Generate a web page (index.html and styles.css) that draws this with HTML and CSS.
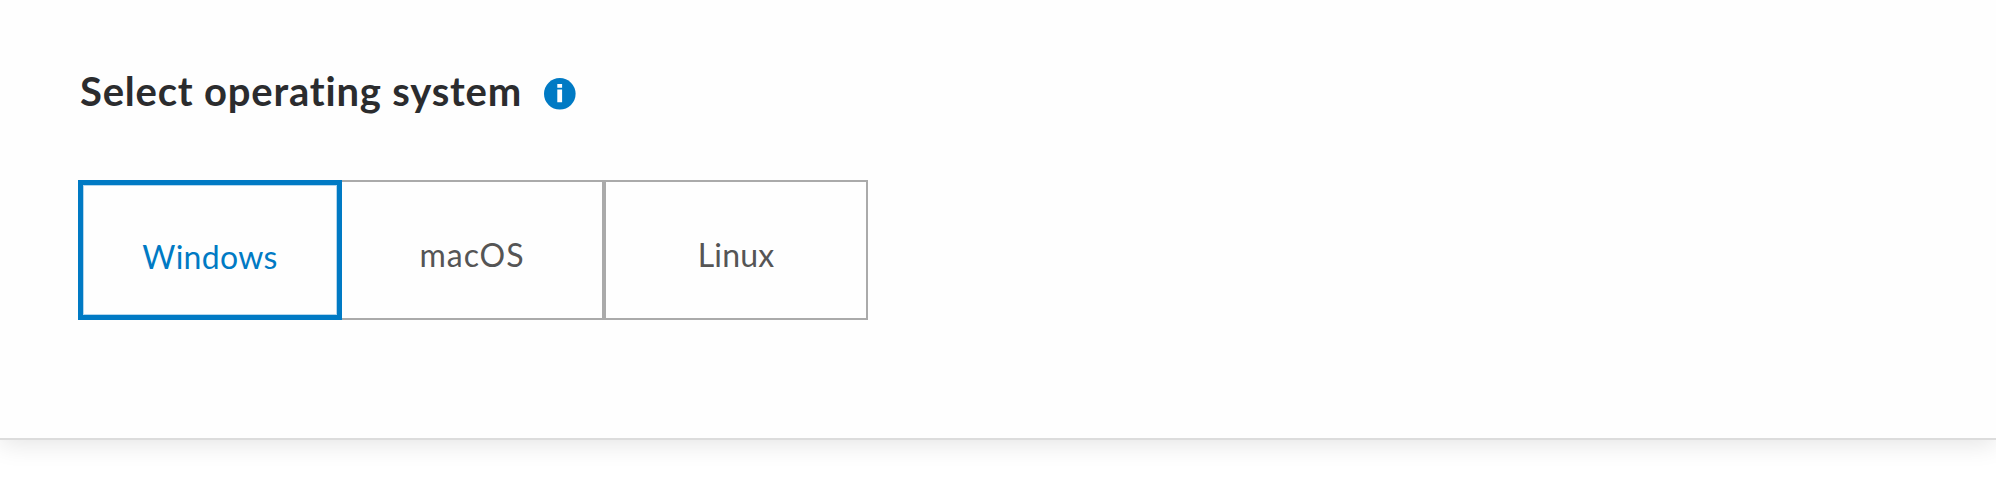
FILE: index.html
```html
<!DOCTYPE html>
<html lang="en">
<head>
<meta charset="utf-8">
<title>Select operating system</title>
<link rel="stylesheet" href="styles.css">
</head>
<body>
<main class="panel">
  <header class="heading">
    <h1 class="title">Select operating system</h1>
    <svg class="info" viewBox="0 0 32 32" role="img" aria-label="Information">
      <circle cx="15.8" cy="15.8" r="15.8" fill="#007ac4"/>
      <path d="M13.3 6h4.8v3.7h-4.8zM13.3 11.5h4.8v12.7h-4.8z" fill="#fff"/>
    </svg>
  </header>
  <div class="options">
    <button class="option selected"><span class="label-windows">Windows</span></button>
    <button class="option joined"><span class="label-macos">macOS</span></button>
    <button class="option"><span class="label-linux">Linux</span></button>
  </div>
</main>
</body>
</html>
```

FILE: styles.css
```css
* { box-sizing: border-box; }
body { margin: 0; background: #fff; font-family: Lato, sans-serif; overflow: hidden; height: 480px; }
.panel { height: 440px; padding: 66px 78px 0; background: #fefefe; border-bottom: 2px solid #dcdcdc; box-shadow: 0 4px 24px rgba(0,0,0,.11); }
.heading { display: flex; align-items: center; height: 50px; gap: 22px; }
.title { margin: 0 0 0 2px; width: 442px; font-size: 40px; font-weight: 700; line-height: 50px; letter-spacing: .8px; font-variant-ligatures: none; color: #2b2c2e; white-space: nowrap; }
.info { width: 32px; height: 32px; margin-top: 6px; }
.options { display: flex; margin-top: 64px; }
.option { width: 264px; height: 140px; padding: 9px 0 0; border: 2px solid #aaa; border-radius: 0; background: #fefefe; color: #555; font: 400 32px Lato, sans-serif; }
.joined { width: 262px; border-left: 0; }
.selected { padding-top: 13px; border: 5px solid #007ac4; box-shadow: inset 0 0 0 1px #b3d6ed; color: #007ac4; }
.label-windows { letter-spacing: .3px; }
.label-macos { letter-spacing: 1px; }
.label-linux { letter-spacing: .2px; }
```
